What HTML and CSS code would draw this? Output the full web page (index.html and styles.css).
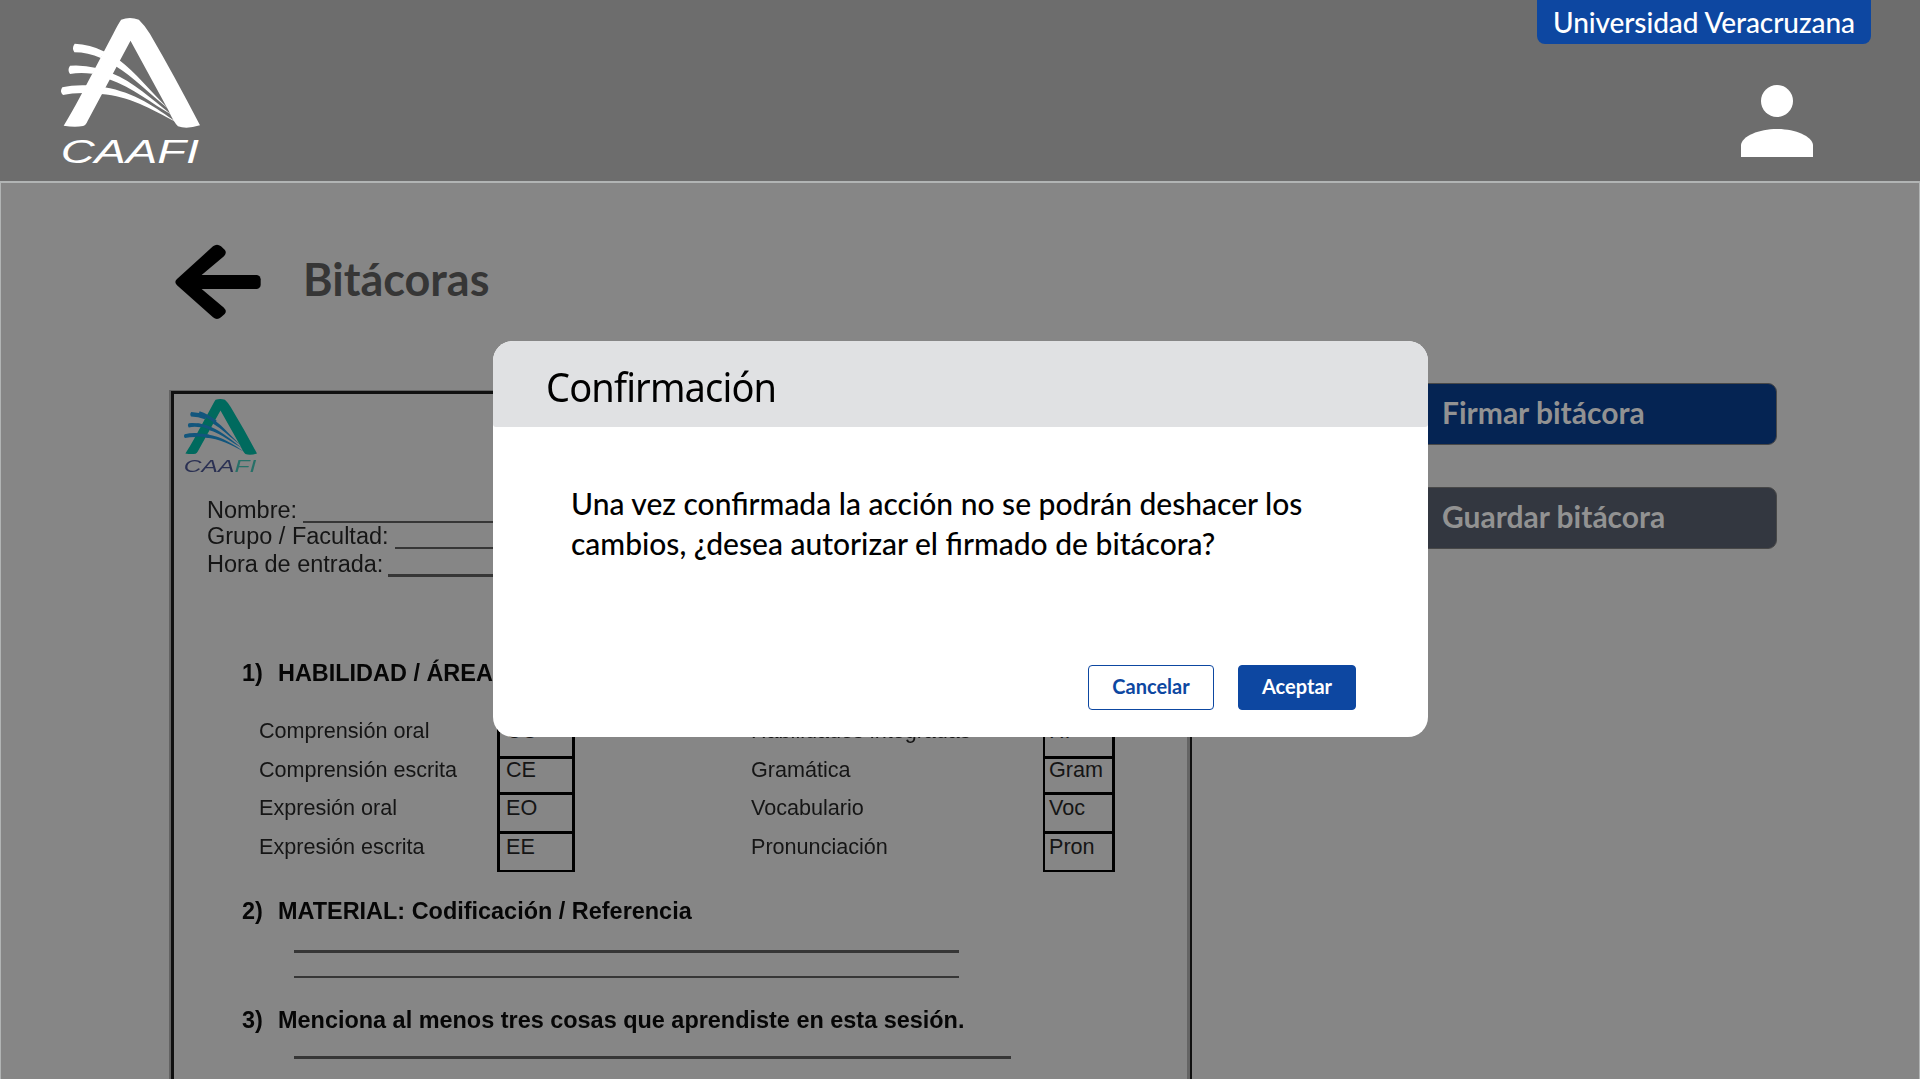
FILE: index.html
```html
<!DOCTYPE html>
<html lang="es">
<head>
<meta charset="utf-8">
<title>Bitácoras</title>
<link rel="stylesheet" href="styles.css">
</head>
<body>
<svg class="defs" aria-hidden="true">
  <symbol id="caafi" viewBox="64 54 416 438" preserveAspectRatio="none">
    <path class="logo-a" fill-rule="evenodd" d="M244 59Q270 49 297 59Q315 76 330 101Q405 230 480 376Q440 389 414 379Q401 366 385 330L272 122L144 362Q138 376 130 378Q105 383 72 377Q100 330 118 296L222 98Q235 72 244 59Z"/>
    <path class="logo-wave" d="M105 131Q150 132 195 155L183 174Q145 157 104 157Q95 144 105 131ZM91 197Q130 194 170 204L158 221Q120 216 91 222Q82 210 91 197ZM68 262Q100 254 145 256L131 279Q95 279 70 285Q59 275 68 262Z"/>
    <path class="logo-wave" d="M238 180C285 215 330 272 386 327C330 283 280 230 228 199ZM216 220C280 245 335 298 395 344C335 312 280 262 208 238ZM194 262C285 277 350 325 408 366C330 325 270 289 184 282Z"/>
    <path class="logo-cross" d="M150 135Q195 150 245 190M140 207Q190 212 225 235M120 268Q160 265 205 275"/>
    <text class="logo-text" x="63" y="488" textLength="414" lengthAdjust="spacingAndGlyphs">CAA<tspan class="logo-fi">FI</tspan></text>
  </symbol>
</svg>

<header class="topbar">
  <svg class="logo"><use href="#caafi"/></svg>
  <div class="account">
    <div class="tag">Universidad Veracruzana</div>
    <svg class="person" viewBox="0 0 72 72"><circle cx="36" cy="16" r="16"/><path d="M0 72V60C1 51 18 44 36 44S71 51 72 60V72Z"/></svg>
  </div>
</header>

<main class="content">
  <div class="heading">
    <svg class="back" viewBox="76 73 258 226" preserveAspectRatio="none"><rect x="140" y="165" width="193" height="42" rx="13"/><path d="M82 177L190 80Q202 70 214 80L225 90Q233 99 222 110L155 166V206L222 262Q233 273 225 281L214 291Q202 301 190 291L82 196Q72 186 82 177Z"/></svg>
    <h1>Bitácoras</h1>
  </div>
  <div class="columns">
    <article class="sheet">
      <svg class="sheet-logo"><use href="#caafi"/></svg>
      <div class="fields">
        <div class="field f1"><span>Nombre:</span><i></i></div>
        <div class="field f2"><span>Grupo / Facultad:</span><i></i></div>
        <div class="field f3"><span>Hora de entrada:</span><i></i></div>
      </div>
      <h2 class="s1"><span>1)</span>HABILIDAD / ÁREA</h2>
      <div class="skills">
        <ul class="names"><li>Comprensión oral</li><li>Comprensión escrita</li><li>Expresión oral</li><li>Expresión escrita</li></ul>
        <ul class="codes left"><li>CO</li><li>CE</li><li>EO</li><li>EE</li></ul>
        <ul class="names"><li>Habilidades integradas</li><li>Gramática</li><li>Vocabulario</li><li>Pronunciación</li></ul>
        <ul class="codes right"><li>HI</li><li>Gram</li><li>Voc</li><li>Pron</li></ul>
      </div>
      <h2 class="s2"><span>2)</span>MATERIAL: Codificación / Referencia</h2>
      <div class="rule r1"></div>
      <div class="rule r2"></div>
      <h2 class="s3"><span>3)</span>Menciona al menos tres cosas que aprendiste en esta sesión.</h2>
      <div class="rule r3"></div>
    </article>
    <aside class="actions">
      <button class="action sign">Firmar bitácora</button>
      <button class="action save">Guardar bitácora</button>
    </aside>
  </div>
</main>

<section class="modal" role="dialog">
  <div class="modal-head"><span class="modal-title">Confirmación</span></div>
  <p class="modal-text">Una vez confirmada la acción no se podrán deshacer los<br>cambios, ¿desea autorizar el firmado de bitácora?</p>
  <div class="modal-buttons">
    <button class="btn cancel">Cancelar</button>
    <button class="btn accept">Aceptar</button>
  </div>
</section>
</body>
</html>
```
FILE: styles.css
```css
* { box-sizing: border-box; margin: 0; padding: 0; }
body { width: 1920px; height: 1079px; overflow: hidden; position: relative; background: #868686; font-family: Lato, sans-serif; display: flex; flex-direction: column; }
button { font-family: inherit; white-space: nowrap; }
ul { list-style: none; }
.defs { position: absolute; width: 0; height: 0; }

.topbar { flex: none; height: 181px; background: #6d6d6d; display: flex; justify-content: space-between; padding: 0 49px 0 61px; }
.logo { width: 139px; height: 146px; margin-top: 18px; --a: #fff; --wave: #fff; --text: #fff; --fi: #fff; --cross: none; }
.logo-a { fill: var(--a); }
.logo-wave { fill: var(--wave); }
.logo-cross { fill: none; stroke: var(--cross); stroke-width: 18; }
.logo-text { fill: var(--text); font: italic 99px "Liberation Sans", sans-serif; }
.logo-fi { fill: var(--fi); }
.account { display: flex; flex-direction: column; align-items: flex-end; }
.tag { width: 334px; height: 44px; border-radius: 0 0 8px 8px; background: #0d47a1; color: #fff; font-size: 28px; letter-spacing: -.08px; line-height: 45px; text-align: center; font-weight: 500; white-space: nowrap; }
.person { width: 72px; height: 72px; margin: 41px 58px 0 0; fill: #fff; }

.content { flex: 1; border: solid #b1b4b4; border-width: 2px 1px 0; padding: 61px 0 0 168px; }
.heading { display: flex; height: 76px; }
.back { width: 86px; height: 76px; margin-left: 6px; }
h1 { color: #363636; font-size: 45px; line-height: 56px; font-weight: 700; margin: 7px 0 0 42px; }
.columns { display: flex; margin-top: 63px; }

.sheet { flex: none; width: 1021px; height: 720px; margin: 8px 188px 0 2px; border: solid #101010; border-width: 3px 2px 0 3px; box-shadow: -2px -1px 0 #626262, inset -3px 0 0 #646464; padding: 5px 0 0 10px; font-family: "Liberation Sans", Arial, sans-serif; color: #151515; }
.sheet-logo { display: block; width: 73px; height: 74px; filter: blur(.4px); --a: #006a5e; --wave: #12567d; --text: #2b3153; --fi: #277068; --cross: #12567d; }
.fields { padding: 24px 0 0 23px; font-size: 23.5px; line-height: 27px; }
.field { display: flex; height: 26px; white-space: nowrap; filter: blur(.4px); }
.field i { width: 400px; height: 2px; margin-top: 24px; background: #363636; }
.f1 i { margin-left: 6px; }
.f2 i { margin-left: 6px; }
.f3 { padding-top: 2px; height: 28px; }
.f3 i { margin-left: 5px; margin-top: 23px; height: 3px; }
h2 { display: flex; height: 28px; margin-left: 58px; color: #060606; font-size: 23.45px; line-height: 28px; font-weight: 700; white-space: nowrap; filter: blur(.4px); }
h2 span { width: 36px; }
.s1 { margin-top: 82px; }
.skills { display: grid; grid-template-columns: 238px 254px 292px 72px; margin: 30px 0 0 75px; height: 156px; font-size: 21.6px; }
.names li { height: 38.7px; line-height: 28px; white-space: nowrap; filter: blur(.4px); }
.codes { border: 3px solid #000; border-bottom-width: 2px; height: 155px; }
.codes li { padding-left: 6px; line-height: 26px; height: 39px; border-bottom: 3px solid #000; }
.codes li:nth-child(1) { line-height: 21px; }
.codes li:nth-child(2) { height: 36px; line-height: 21px; }
.codes li:last-child { border: 0; }
.left { width: 78px; }
.right { width: 72px; border-left-width: 2px; }
.right li { padding-left: 4px; }
.s2 { margin-top: 24px; }
.rule { margin-left: 110px; width: 665px; height: 3px; background: #363636; }
.r1 { margin-top: 25px; }
.r2 { margin-top: 23px; height: 2px; }
.s3 { margin-top: 28px; }
.r3 { margin-top: 22px; width: 717px; }

.actions { flex: none; width: 397px; display: grid; gap: 42px; align-content: start; }
.action { height: 62px; border: 1px solid #484848; border-radius: 9px; text-align: left; padding: 0 0 5px 61px; font-size: 30px; font-weight: 700; color: #929292; }
.sign { background: #052453; }
.save { background: #333740; }

.modal { position: absolute; left: 493px; top: 341px; width: 935px; height: 396px; border-radius: 20px; overflow: hidden; background: #fff; color: #000; }
.modal-head { height: 86px; background: #e0e1e3; border-radius: 0 0 3px 3px; padding-left: 53px; font: 40px/91px "Noto Sans", sans-serif; }
.modal-title { display: inline-block; letter-spacing: -.9px; transform: scaleX(.95); transform-origin: left; }
.modal-text { padding: 56px 0 0 78px; height: 238px; font-size: 30px; line-height: 40px; font-weight: 500; white-space: nowrap; }
.modal-buttons { display: flex; justify-content: flex-end; gap: 24px; padding-right: 72px; }
.btn { height: 45px; border-radius: 4px; border: 1px solid #0d47a1; font-size: 20px; font-weight: 700; padding-bottom: 4px; }
.cancel { width: 126px; background: #fff; color: #0d47a1; }
.accept { width: 118px; background: #0d47a1; color: #fff; }
```
